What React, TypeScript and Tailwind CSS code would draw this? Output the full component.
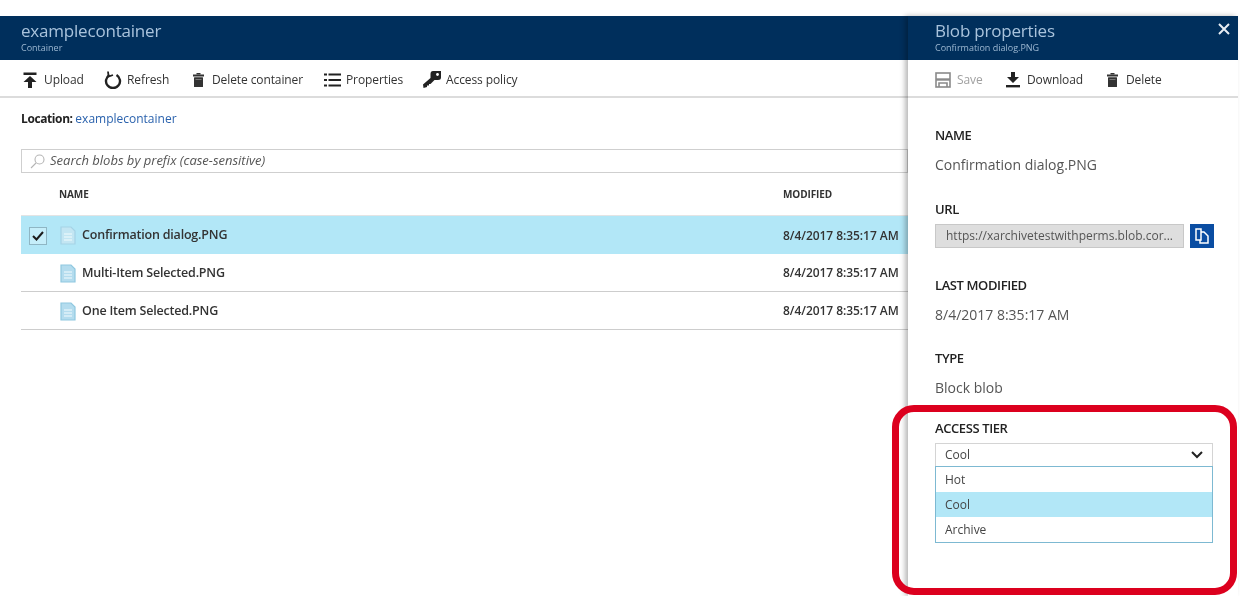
import React from 'react';

const FONT = "font-['Open_Sans','Noto_Sans',sans-serif]";

const UploadIcon = () => (
  <svg width="14" height="16" viewBox="0 0 14 16" fill="#222">
    <rect x="0.5" y="0.5" width="13" height="2.5" />
    <path d="M7 4 L13.5 10 L9 10 L9 16 L5 16 L5 10 L0.5 10 Z" />
  </svg>
);

const RefreshIcon = () => (
  <svg width="18" height="18" viewBox="0 0 18 18" fill="none" stroke="#222" strokeWidth="2.4">
    <path d="M5.5 4 A7 7 0 1 0 12.5 4" />
    <path d="M4 0.5 L4.6 5.6 L9 4" strokeWidth="1.8" />
  </svg>
);

const TrashIcon = () => (
  <svg width="11" height="14" viewBox="0 0 11 14" fill="#333">
    <rect x="3.5" y="0" width="4" height="1.5" />
    <rect x="0" y="1.5" width="11" height="2" />
    <rect x="1" y="4.2" width="9" height="9.8" rx="0.5" />
    <rect x="2.5" y="6" width="6" height="0.8" fill="#888" />
  </svg>
);

const ListIcon = () => (
  <svg width="17" height="14" viewBox="0 0 17 14" fill="#222">
    <rect x="0" y="0.5" width="3" height="2" />
    <rect x="4.5" y="0.5" width="12.5" height="2" />
    <rect x="0" y="6" width="3" height="2" />
    <rect x="4.5" y="6" width="12.5" height="2" />
    <rect x="0" y="11.5" width="3" height="2" />
    <rect x="4.5" y="11.5" width="12.5" height="2" />
  </svg>
);

const KeyIcon = () => (
  <svg width="18" height="17" viewBox="0 0 18 17" fill="#222">
    <path d="M10 0 L18 0 L18 6.5 Q18 9 15 9 L11.5 9 L7.5 13 L6 13 L6 14.5 L4 14.5 L4 16 L0.5 17 L0 13.5 L7.5 7 L7.5 3 Q7.5 0 10 0 Z" />
    <circle cx="14.5" cy="3.5" r="1.4" fill="#fff" />
  </svg>
);

const SaveIcon = () => (
  <svg width="16" height="16" viewBox="0 0 16 16" fill="none" stroke="#8a8a8a" strokeWidth="1.6">
    <rect x="1" y="1" width="14" height="14" />
    <path d="M1 7.5 H15" strokeWidth="2.4" />
    <path d="M4 15 V11 H12 V15" />
  </svg>
);

const DownloadIcon = () => (
  <svg width="16" height="16" viewBox="0 0 16 16" fill="#222">
    <path d="M6 0 H10 V5 H14 L8 11 L2 5 H6 Z" />
    <rect x="1" y="13" width="14" height="2.4" />
  </svg>
);

const FileIcon = ({ faded }: { faded?: boolean }) => (
  <svg width="16" height="19" viewBox="0 0 16 19">
    <path
      d="M1 1 H11 L15 5 V18 H1 Z"
      fill={faded ? '#c3e6f3' : '#b4dcee'}
      stroke={faded ? '#a5d3e6' : '#8fc8e0'}
      strokeWidth="1.2"
    />
    <path d="M4 8 H12 M4 11 H12 M4 14 H12" stroke="#f4fbfe" strokeWidth="1.2" />
  </svg>
);

const CopyIcon = () => (
  <svg width="14" height="16" viewBox="0 0 14 16" fill="none" stroke="#fff" strokeWidth="1.5">
    <path d="M1 1 H6 V12 H1 Z" />
    <path d="M6 4 H9 L13 8 V15 H5 V12" />
  </svg>
);

const ToolButton = ({
  icon,
  label,
  muted,
  width,
}: {
  icon: React.ReactNode;
  label: string;
  muted?: boolean;
  width: string;
}) => (
  <div className={`flex items-center gap-[5px] ${width}`}>
    <span className="flex w-[18px] justify-center">{icon}</span>
    <span className={`text-[12px] tracking-[-0.1px] ${muted ? 'text-[#a0a0a0]' : 'text-[#333]'}`}>{label}</span>
  </div>
);

const rows = [
  { name: 'Confirmation dialog.PNG', selected: true },
  { name: 'Multi-Item Selected.PNG', selected: false },
  { name: 'One Item Selected.PNG', selected: false },
];

const LABEL = 'text-[13px] leading-[16px] font-semibold tracking-[-0.4px] text-[#222]';

const Field = ({ label, value, className }: { label: string; value: string; className: string }) => (
  <div className={className}>
    <div className={LABEL}>{label}</div>
    <div className="mt-[12px] text-[14px] leading-[20px] text-[#555]">{value}</div>
  </div>
);

export default function App() {
  return (
    <div className={`relative flex h-[596px] w-[1240px] overflow-hidden bg-white pt-4 blur-[0.5px] ${FONT}`}>
      {/* blade on the left */}
      <div className="w-[908px] shrink-0">
        <div className="flex h-[44px] flex-col bg-[#002f5c] pt-[4px] pl-[21px] text-[#a9c3dc]">
          <div className="text-[17px] leading-[22px] tracking-[-0.2px]">examplecontainer</div>
          <div className="text-[9px] leading-[12px] text-[#9cb8d2]">Container</div>
        </div>
        <div className="flex h-[38px] items-center border-b-2 border-[#dcdcdc] pt-[3px] pl-[21px]">
          <ToolButton icon={<UploadIcon />} label="Upload" width="w-[83px]" />
          <ToolButton icon={<RefreshIcon />} label="Refresh" width="w-[85px]" />
          <ToolButton icon={<TrashIcon />} label="Delete container" width="w-[134px]" />
          <ToolButton icon={<ListIcon />} label="Properties" width="w-[100px]" />
          <ToolButton icon={<KeyIcon />} label="Access policy" width="w-[110px]" />
        </div>
        <div className="pt-[13px] pl-[21px] text-[12px] leading-[16px]">
          <span className="font-bold tracking-[-0.4px] text-[#222]">Location: </span>
          <span className="text-[#2a62ad]">examplecontainer</span>
        </div>
        <div className="mt-[22px] ml-[21px] flex h-[24px] items-center gap-[5px] border border-[#cfcfcf] pl-[8px]">
          <svg width="15" height="15" viewBox="0 0 15 15" fill="none" stroke="#b5b5b5" strokeWidth="1.1">
            <circle cx="9.5" cy="5.5" r="4.5" />
            <path d="M6 9 L1 14" />
          </svg>
          <span className="text-[13px] text-[#555] italic">Search blobs by prefix (case-sensitive)</span>
        </div>
        <div className="ml-[21px] flex h-[43px] items-center border-b border-[#e4e4e4] text-[10px] font-bold tracking-[-0.1px] text-[#333]">
          <div className="w-[762px] pl-[38px]">NAME</div>
          <div>MODIFIED</div>
        </div>
        {rows.map((row) => (
          <div
            key={row.name}
            className={`ml-[21px] flex h-[38px] items-center pt-[1px] text-[#333] ${
              row.selected ? 'bg-[#b2e7f7]' : 'border-b border-[#cdcdcd]'
            }`}
          >
            <div className="w-[39px] pl-[8px]">
              {row.selected && (
                <div className="flex h-[18px] w-[18px] items-center justify-center border border-[#8fb6c4] bg-[#c5eefa]">
                  <svg width="12" height="10" viewBox="0 0 12 10" fill="none" stroke="#1c1c1c" strokeWidth="2">
                    <path d="M1 5 L4.5 8.5 L11 1" />
                  </svg>
                </div>
              )}
            </div>
            <FileIcon faded={row.selected} />
            <div className="w-[707px] pl-[6px] text-[12.5px] font-semibold tracking-[-0.2px]">{row.name}</div>
            <div className="text-[12px] font-semibold tracking-[-0.05px] whitespace-nowrap">8/4/2017 8:35:17 AM</div>
          </div>
        ))}
      </div>

      {/* properties panel */}
      <div className="z-10 flex w-[330px] shrink-0 flex-col bg-white shadow-[-3px_0_5px_rgba(0,0,0,0.28)]">
        <div className="relative h-[44px] bg-[#002f5c] pt-[4px] pl-[27px] text-[#a9c3dc]">
          <div className="text-[17px] leading-[22px] tracking-[-0.2px]">Blob properties</div>
          <div className="text-[9px] leading-[12px] text-[#9cb8d2]">Confirmation dialog.PNG</div>
          <svg
            className="absolute top-[7px] right-[8px]"
            width="12"
            height="12"
            viewBox="0 0 12 12"
            stroke="#e8eef4"
            strokeWidth="2"
          >
            <path d="M1 1 L11 11 M11 1 L1 11" />
          </svg>
        </div>
        <div className="flex h-[38px] items-center border-b-2 border-[#dcdcdc] pt-[3px] pl-[26px]">
          <ToolButton icon={<SaveIcon />} label="Save" muted width="w-[70px]" />
          <ToolButton icon={<DownloadIcon />} label="Download" width="w-[99px]" />
          <ToolButton icon={<TrashIcon />} label="Delete" width="w-[70px]" />
        </div>
        <div className="pl-[27px]">
          <Field label="NAME" value="Confirmation dialog.PNG" className="pt-[29px]" />
          <div className={`mt-[26px] ${LABEL}`}>URL</div>
          <div className="mt-[7px] flex h-[24px] gap-[6px]">
            <div className="flex w-[249px] items-center border border-[#c8c8c8] bg-[#dedede] pl-[10px] text-[12px] text-[#555]">
              https://xarchivetestwithperms.blob.cor...
            </div>
            <div className="flex w-[24px] items-center justify-center bg-[#0a4da2]">
              <CopyIcon />
            </div>
          </div>
          <Field label="LAST MODIFIED" value="8/4/2017 8:35:17 AM" className="pt-[29px]" />
          <Field label="TYPE" value="Block blob" className="pt-[25px]" />
          <div className={`mt-[22px] ${LABEL}`}>ACCESS TIER</div>
          <div className="mt-[7px] w-[278px] text-[12px] text-[#444]">
            <div className="flex h-[23px] items-center justify-between border border-b-0 border-[#d4d4d4] px-[9px]">
              <span>Cool</span>
              <svg width="12" height="8" viewBox="0 0 12 8" fill="none" stroke="#222" strokeWidth="2">
                <path d="M1 1 L6 6 L11 1" />
              </svg>
            </div>
            <div className="border border-[#7db9d2]">
              <div className="flex h-[25px] items-center pl-[9px]">Hot</div>
              <div className="flex h-[25px] items-center bg-[#b2e7f7] pl-[9px]">Cool</div>
              <div className="flex h-[25px] items-center pl-[9px]">Archive</div>
            </div>
          </div>
        </div>
      </div>

      {/* red callout drawn over the screenshot */}
      <div className="absolute top-[405px] left-[892px] z-20 h-[190px] w-[345px] rounded-[22px] border-[7px] border-[#dc001e]" />
    </div>
  );
}
